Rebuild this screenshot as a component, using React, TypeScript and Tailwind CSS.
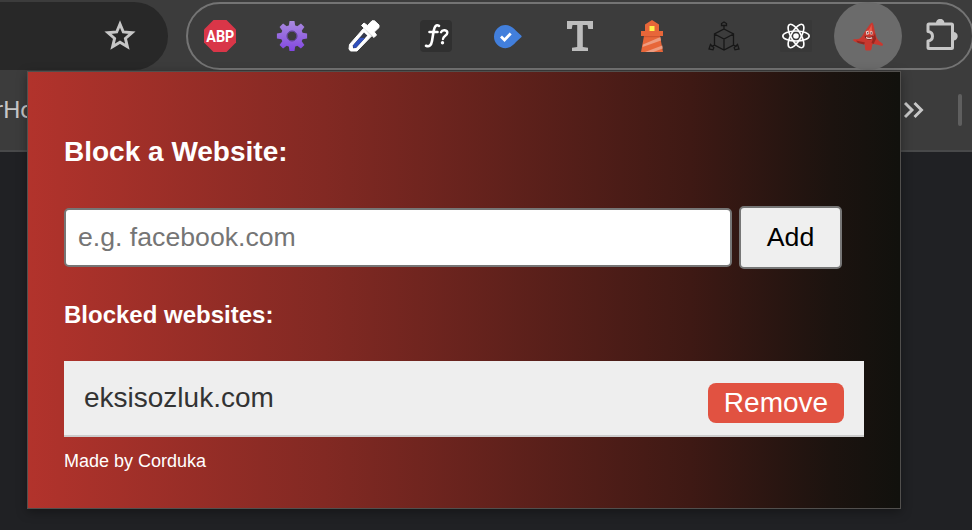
import React from "react";

function AbpIcon() {
  return (
    <svg viewBox="0 0 32 32" className="size-8 shrink-0">
      <path d="M9.5 0h13L32 9.500v13L22.500 32h-13L0 22.500v-13z" fill="#d93648" />
      <text x="2.300" y="21.900" fontSize="16" fontWeight="700" fill="#fff" textLength="28" lengthAdjust="spacingAndGlyphs" className="font-[Roboto,sans-serif]">ABP</text>
    </svg>
  );
}

const teeth = [0, 45, 90, 135, 180, 225, 270, 315];

function GearIcon() {
  return (
    <svg viewBox="0 0 32 32" className="size-8">
      <defs>
        <linearGradient id="gear" gradientUnits="userSpaceOnUse" x1="0" y1="1" x2="0" y2="31">
          <stop offset="0" stopColor="#a98add" />
          <stop offset="1" stopColor="#8247e2" />
        </linearGradient>
        <mask id="gearMask">
          <circle cx="16" cy="16" r="11" fill="#fff" />
          {teeth.map((a) => (
            <path key={a} d="M12.6 7l.9-6.1h5l.9 6.1z" fill="#fff" transform={`rotate(${a} 16 16)`} />
          ))}
          <circle cx="16" cy="16" r="4.6" fill="#000" />
        </mask>
      </defs>
      <rect width="32" height="32" fill="url(#gear)" mask="url(#gearMask)" />
      <circle cx="16" cy="16" r="5" fill="none" stroke="#59408a" strokeWidth="1" />
    </svg>
  );
}

function DropperIcon() {
  return (
    <svg viewBox="0 0 32 32" className="size-8">
      <path d="M1.500 24.500L15.500 8.500l8 7.500L9 31H2.500L1 29z" fill="#fff" stroke="#fff" strokeWidth="1" strokeLinejoin="round" />
      <path d="M4.800 25.500L16 12.500l3.300 3L8 28l-3 .3z" fill="#35394a" />
      <path d="M5.200 25.200l6.800-7.400 5 .2L8 27.800l-2.500.2z" fill="#3150bd" />
      <path d="M13.500 5.500l2.500-2.500 3.500 2.500L24 .8h2.500L31 5v2.500L26.300 12l2.200 3-2.500 2.500z" fill="#fff" stroke="#fff" strokeWidth="1" strokeLinejoin="round" />
    </svg>
  );
}

function FormulaIcon() {
  return (
    <svg viewBox="0 0 32 32" className="size-8">
      <rect width="32" height="32" rx="4" fill="#303030" />
      <path d="M19 5.800c-2.900-1.700-4.600.8-5.300 5L12 21c-.8 4.500-2.800 6.200-6 4.800M9.500 12h8" fill="none" stroke="#fff" strokeWidth="2.600" strokeLinecap="round" />
      <path d="M21 12.200c1.300-3 6.500-2.500 6.300.6-.2 3-4 2.900-4.300 6.200" fill="none" stroke="#fff" strokeWidth="2.400" strokeLinecap="round" />
      <circle cx="22.500" cy="22.700" r="1.700" fill="#fff" />
    </svg>
  );
}

function TagCheckIcon() {
  return (
    <svg viewBox="0 0 32 32" className="size-8">
      <path d="M13.500 5c4.500 0 8 3.200 10.500 5.700l5.200 4.800c.6.700.6 1.200 0 1.800L24 22c-3 3.200-6 6.200-10.500 6.200A11.500 11.500 0 0 1 2 16.600 11.500 11.500 0 0 1 13.500 5z" fill="#427fdc" />
      <path d="M9 16.500l3.500 3.500L18.700 13.500" fill="none" stroke="#fff" strokeWidth="2.800" />
    </svg>
  );
}

function SlabTIcon() {
  return (
    <svg viewBox="0 0 32 32" className="size-8">
      <path d="M3 1h26v8h-4.700L23.500 5h-4.700v22l5.200.800V31H8v-3.200l5.200-.8V5H8.500l-.8 4H3z" fill="#bdbdbd" />
    </svg>
  );
}

function LighthouseIcon() {
  return (
    <svg viewBox="0 0 32 32" className="size-8">
      <path d="M16 0l7 4.500V11h4v5h-3l3 16H5L8 16H5v-5h4V4.500z" fill="#e76639" />
      <path d="M7 24.500L6.500 27 25 20.500 24.300 17zM9 32l17.300-6.500.4 3L17.500 32z" fill="#ed9c80" />
      <path d="M13.500 6h5v5h-5z" fill="#fff04a" />
      <path d="M8 16h16v1.200H8z" fill="#cf542f" />
    </svg>
  );
}

function CubeIcon() {
  return (
    <svg viewBox="0 0 32 32" className="size-8" fill="none" stroke="#171717" strokeWidth="1.300">
      <path d="M16 9l9.500 5v11L16 30l-9.500-5V14zM6.500 14l9.500 5 9.500-5M16 19v11M16 9V5M6.500 25l-3 1.800M25.500 25l3 1.800" />
      <path d="M13.500 5.500v-2L16 2l2.500 1.500v2zM2.500 24.500L1 29l4 .8.8-2.200zM29.500 24.500L31 29l-4 .8-.8-2.200z" />
    </svg>
  );
}

function AtomIcon() {
  return (
    <svg viewBox="0 0 32 32" className="size-8">
      <rect width="32" height="32" rx="1" fill="#383838" />
      <g fill="none" stroke="#fff" strokeWidth="1.600">
        <ellipse cx="16" cy="16" rx="13.200" ry="5" />
        <ellipse cx="16" cy="16" rx="13.200" ry="5" transform="rotate(60 16 16)" />
        <ellipse cx="16" cy="16" rx="13.200" ry="5" transform="rotate(120 16 16)" />
      </g>
      <circle cx="16" cy="16" r="2.800" fill="#fff" />
    </svg>
  );
}

function StarfishIcon() {
  return (
    <svg viewBox="0 0 32 32" className="size-8">
      <path d="M20 2.500c1.600 0 2.300 7 3.600 12 .9 3.500 2.400 6.200 6.200 8.500 2 1.300 1.200 3-.5 2.700-3-.6-5.500-1.800-8.300-1.700-1.500 1-.8 6-2.500 6.500H14c-1.500-1-.5-4-1.500-6-3-1.500-7-1.500-10-3L.8 20l1.500-1c2.200.3 5 .8 7.200-2.200C12.500 13 17.500 3.500 20 2.500z" fill="#c9382f" />
      <path d="M19.500 4.500c-1 4-4 6-5 9l3 1 2.500-3z" fill="#ec5948" />
      <path d="M23 13l1 6-2.500 5-2-1zM4 20.500l9 2-1 2-6-1.500z" fill="#97271f" />
      <path d="M13.700 11.500l2.500-1 1 3.500-2.700 1zM18.300 11l2.200.5v3h-2.200z" fill="#eed2cb" />
      <path d="M15.200 12h1v1.500h-1zM18.800 12.300h1v1.500h-1z" fill="#4a2430" />
      <path d="M12.500 15.500c2.500 2 6.500 2 9 .300.3 4.700-8 6-9-.3z" fill="#6a2422" />
      <path d="M14 16.700c2 1.200 4.300 1.300 6.200.2v1.500c-1.700 1-4.700.8-6.200-.2z" fill="#f1c2bc" />
    </svg>
  );
}

function PuzzleIcon() {
  return (
    <svg viewBox="0 0 34 34" className="size-[34px] shrink-0">
      <path d="M5 5h22.500q1 0 1 1v22.500q0 1-1 1H5q-1 0-1-1V22c6-.8 6-8.700 0-9.500V6q0-1 1-1z" fill="none" stroke="#c7c7c7" strokeWidth="3" strokeLinejoin="round" />
      <path d="M12 4a4.200 4.200 0 0 1 8.400 0zM29.500 13a4.200 4.200 0 0 1 0 8.400z" fill="#c7c7c7" />
    </svg>
  );
}

function Toolbar() {
  return (
    <div className="flex h-[70px] gap-[18px] pt-[2px]">
      <div className="flex h-[68px] w-[168px] shrink-0 items-center justify-end rounded-r-full bg-[#282828] pr-8">
        <svg viewBox="0 0 32 32" className="size-8">
          <path d="M16 4l3.300 8 8.700.7-6.600 5.700 2 8.400-7.400-4.500-7.400 4.500 2-8.400L4 12.700l8.700-.7z" fill="none" stroke="#c7c7c7" strokeWidth="2.900" />
        </svg>
      </div>
      <div className="flex h-[68px] w-[788px] shrink-0 items-center gap-10 rounded-full border-2 border-[#747474] pl-4">
        <AbpIcon />
        <GearIcon />
        <DropperIcon />
        <FormulaIcon />
        <TagCheckIcon />
        <SlabTIcon />
        <LighthouseIcon />
        <CubeIcon />
        <AtomIcon />
        <div className="-m-[18px] flex size-[68px] shrink-0 items-center justify-center rounded-full bg-[#6b6b6b]">
          <StarfishIcon />
        </div>
        <PuzzleIcon />
      </div>
    </div>
  );
}

function BookmarksBar() {
  return (
    <div className="flex h-[82px] items-center justify-between border-b-2 border-[#48494a] font-[Roboto,sans-serif] text-[24px] text-[#c7c7c7]">
      <span className="-ml-[5px]">rHo</span>
      <div className="flex items-center gap-[33px] pr-[10px]">
        <svg viewBox="0 0 22 18" className="h-[18px] w-[22px]" fill="none" stroke="#c7c7c7" strokeWidth="2.900">
          <path d="M2 2l7 7-7 7M11.500 2l7 7-7 7" />
        </svg>
        <div className="h-8 w-1 rounded-full bg-[#5f5f5f]" />
      </div>
    </div>
  );
}

function Popup() {
  return (
    <div className="absolute left-[27px] top-[71px] h-[438px] w-[874px] border border-[#514f4d] bg-[linear-gradient(to_right,#b2332c,#822923_34%,#3e1914_76%,#1c130f_92%,#11110d)] px-9 shadow-[0_3px_10px_rgba(0,0,0,0.35)]">
      <h1 className="mt-16 h-8 text-[28px] leading-8 font-bold whitespace-nowrap text-white">Block a Website:</h1>
      <div className="mt-[38px] flex items-center gap-[7px]">
        <input
          placeholder="e.g. facebook.com"
          className="h-[59px] w-[668px] rounded-[5px] border-2 border-[#767676] bg-white px-3 text-[26.67px] text-black placeholder:text-[#757575]"
        />
        <button className="h-[63px] w-[103px] rounded-[5px] border-2 border-[#767676] bg-[#efefef] pb-[2px] text-[26.67px] text-black">Add</button>
      </div>
      <h2 className="mt-8 h-7 text-[24px] leading-7 font-bold whitespace-nowrap text-white">Blocked websites:</h2>
      <ul className="mt-8 w-[800px]">
        <li className="flex h-[76px] justify-between border-b-2 border-[#ccc] bg-[#eee] px-5">
          <span className="mt-[21px] h-8 text-[28px] leading-8 text-[#333]">eksisozluk.com</span>
          <button className="mt-[22px] h-10 w-[136px] rounded-lg bg-[#e15241] text-[28px] leading-10 text-white">Remove</button>
        </li>
      </ul>
      <p className="mt-[14px] text-[18px] leading-5 text-white">Made by Corduka</p>
    </div>
  );
}

export default function App() {
  return (
    <div className="relative h-[530px] w-[972px] overflow-hidden bg-[#202124] font-['Liberation_Sans',Arial,sans-serif]">
      <div className="bg-[#3c3c3c]">
        <Toolbar />
        <BookmarksBar />
      </div>
      <Popup />
    </div>
  );
}
